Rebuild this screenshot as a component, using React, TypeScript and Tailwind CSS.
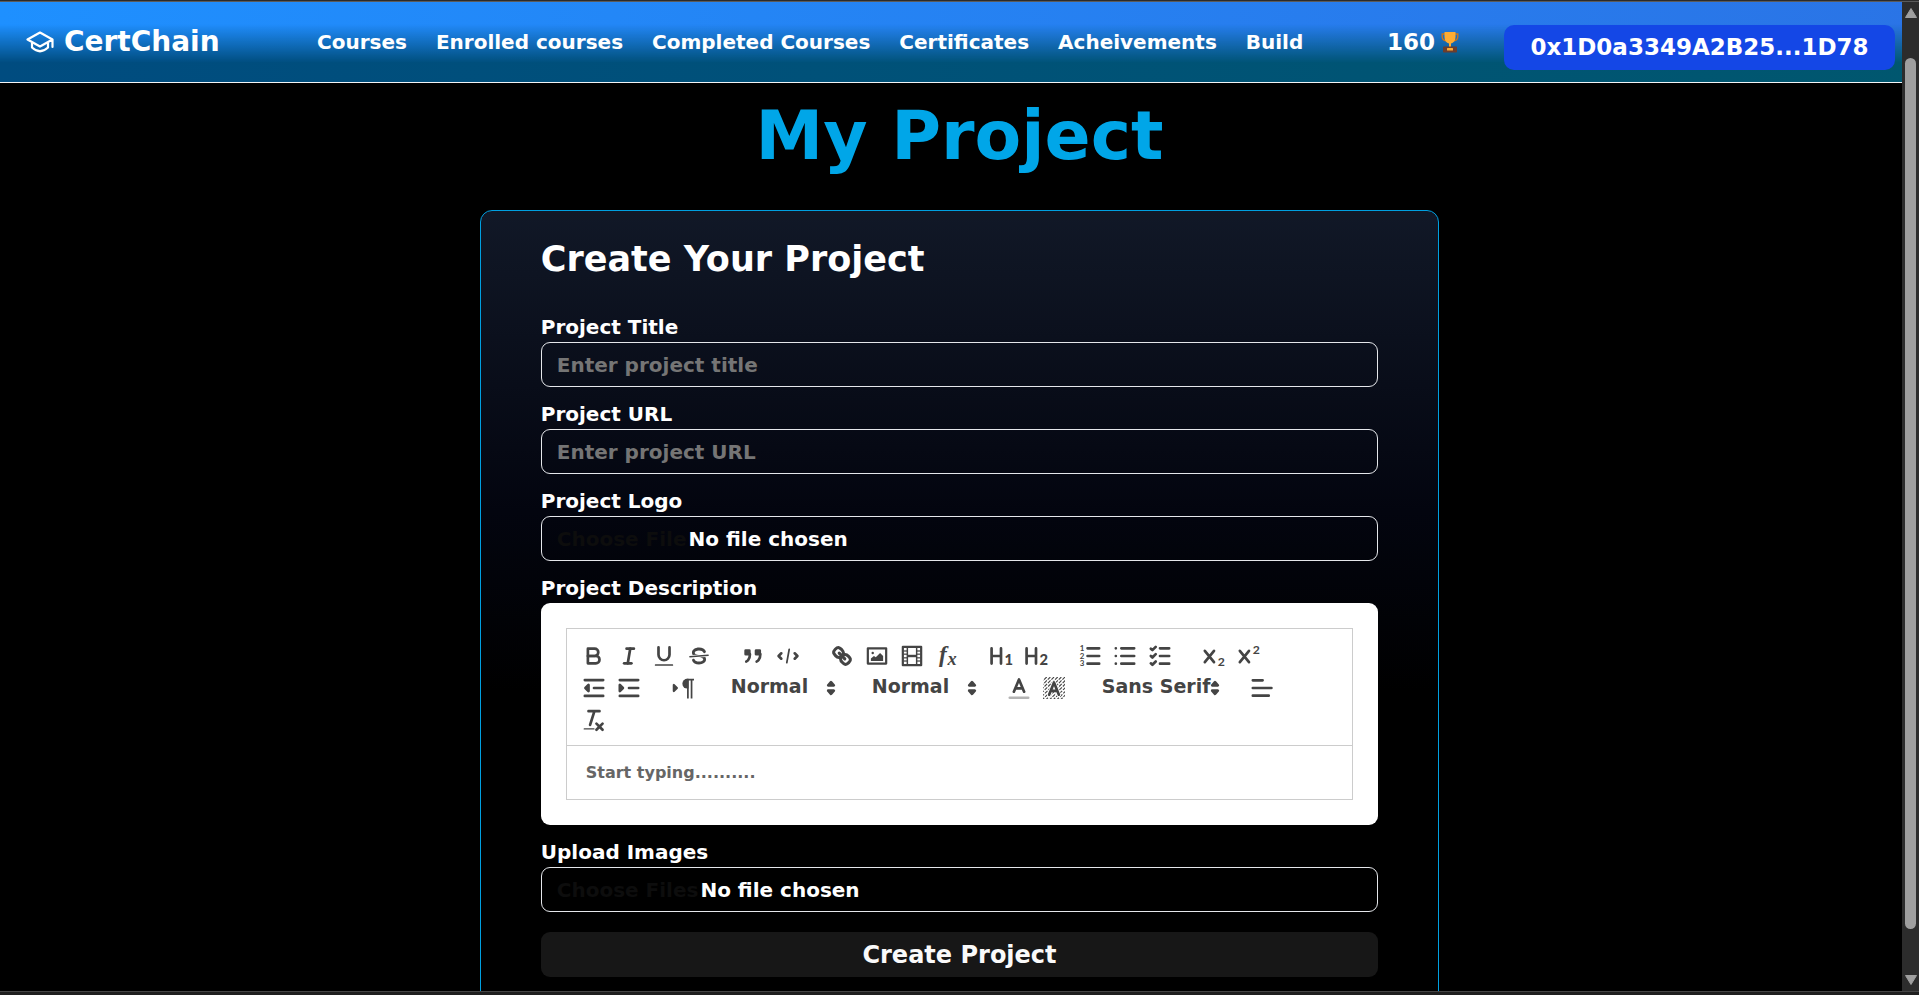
import React from "react";

const navLinks = ["Courses", "Enrolled courses", "Completed Courses", "Certificates", "Acheivements", "Build"];

function Glyph({ children }: { children: React.ReactNode }) {
  return (
    <svg
      viewBox="0 0 18 18"
      className="h-[22px] w-[22px] shrink-0 overflow-visible"
      fill="none"
      stroke="#444"
      strokeWidth="2.2"
      strokeLinecap="round"
      strokeLinejoin="round"
      aria-hidden="true"
    >
      {children}
    </svg>
  );
}

const solid = { fill: "#444", stroke: "none" };
const both = { fill: "#444" };
const sans = { fill: "#444", stroke: "none", fontFamily: "Lato, sans-serif", fontWeight: 700 };
const serif = { fill: "#444", stroke: "none", fontFamily: "'Liberation Serif', serif", fontStyle: "italic", fontWeight: 700 };

const icons: Record<string, React.ReactNode> = {
  bold: (
    <>
      <path d="M4,3H9.500a3,3,0,0,1,0,6H4V3Z" />
      <path d="M4,9h6.500a3,3,0,0,1,0,6H4V9Z" />
    </>
  ),
  italic: (
    <>
      <line x1="7" x2="13" y1="3" y2="3" />
      <line x1="5" x2="11" y1="15" y2="15" />
      <line x1="8" x2="10" y1="15" y2="3" />
    </>
  ),
  underline: (
    <>
      <path d="M4.5,2V8a4.5,4.500,0,0,0,9,0V2" />
      <rect {...solid} height="1.2" rx="0.5" width="15" x="1.5" y="15.8" />
    </>
  ),
  strike: (
    <g transform="translate(-1.35 -1.35) scale(1.15)">
      <line strokeWidth="1" x1="15.5" x2="2.5" y1="8.5" y2="9.5" />
      <path {...solid} d="M9.007,8C6.542,7.791,6,7.519,6,6.5,6,5.792,7.283,5,9,5c1.571,0,2.765.679,2.969,1.309a1,1,0,0,0,1.9-.617C13.356,4.106,11.354,3,9,3,6.2,3,4,4.538,4,6.5a3.2,3.2,0,0,0,.5,1.843Z" />
      <path {...solid} d="M8.984,10C11.457,10.208,12,10.479,12,11.5c0,0.708-1.283,1.5-3,1.5-1.571,0-2.765-.679-2.969-1.309a1,1,0,1,0-1.9.617C4.644,13.894,6.646,15,9,15c2.8,0,5-1.538,5-3.5a3.2,3.2,0,0,0-.5-1.843Z" />
    </g>
  ),
  blockquote: (
    <>
      <rect {...both} height="3" width="3" x="3" y="4.500" />
      <rect {...both} height="3" width="3" x="11.500" y="4.500" />
      <path d="M6.500,7.500c0,5-3,6-3,6" />
      <path d="M15,7.500c0,5-3,6-3,6" />
    </>
  ),
  code: (
    <>
      <polyline points="3.500 6.800 1.300 9 3.500 11.200" />
      <polyline points="14.500 6.800 16.700 9 14.500 11.200" />
      <line strokeWidth="1.4" x1="10" x2="8" y1="3.500" y2="14.500" />
    </>
  ),
  link: (
    <g transform="translate(-1.35 -1.35) scale(1.15)">
      <line x1="7" x2="11" y1="7" y2="11" />
      <path d="M8.9,4.577a3.476,3.476,0,0,1,.36,4.679A3.476,3.476,0,0,1,4.577,8.9C3.185,7.5,2.035,6.4,4.217,4.217S7.5,3.185,8.9,4.577Z" />
      <path d="M13.423,9.1a3.476,3.476,0,0,0-4.679-.36,3.476,3.476,0,0,0,.36,4.679c1.392,1.392,2.5,2.542,4.679.36S14.815,10.5,13.423,9.1Z" />
    </g>
  ),
  image: (
    <>
      <rect strokeWidth="1.8" height="12.500" width="15" x="1.5" y="2.700" />
      <circle {...solid} cx="5.5" cy="6.5" r="1" />
      <polyline {...solid} points="4 13 4 11 6.5 9 8 10 11.5 6.5 14 9 14 13" />
    </>
  ),
  video: (
    <>
      <rect strokeWidth="1.8" height="15" width="15" x="1.500" y="1.500" />
      <g {...solid}>
        <rect height="15" width="1.2" x="4.6" y="1.500" />
        <rect height="15" width="1.2" x="12.2" y="1.500" />
        <rect height="2" width="8" x="5" y="8" />
        {[4.4, 7, 10, 12.6].map((y) => (
          <g key={y}>
            <rect height="1" width="3" x="2" y={y} />
            <rect height="1" width="3" x="13" y={y} />
          </g>
        ))}
      </g>
    </>
  ),
  formula: (
    <>
      <text {...serif} x="2.500" y="13.500" fontSize="19">f</text>
      <text {...serif} x="9.5" y="16.500" fontSize="15">x</text>
    </>
  ),
  header1: (
    <>
      <path d="M1.300,2.800V15.200M9,2.800V15.200M1.300,9H9" />
      <text {...sans} x="11.8" y="16" fontSize="12" fontWeight="900">1</text>
    </>
  ),
  header2: (
    <>
      <path d="M1.300,2.800V15.200M9,2.800V15.200M1.300,9H9" />
      <text {...sans} x="11.8" y="16" fontSize="12" fontWeight="900">2</text>
    </>
  ),
  ordered: (
    <>
      <path d="M7,2.700H16.500M7,9H16.500M7,15.300H16.500" />
      <g {...sans} fontSize="6.5">
        <text x="0.6" y="5">1</text>
        <text x="0.6" y="11.2">2</text>
        <text x="0.6" y="17.4">3</text>
      </g>
    </>
  ),
  bullet: <path d="M6,2.700H16.500M6,9H16.500M6,15.300H16.500M1.500,2.700H1.501M1.500,9H1.501M1.500,15.300H1.501" />,
  check: <path d="M9,2.700H16.500M9,9H16.500M9,15.300H16.500M1.5,3L2.8,4.2L5.5,1.500M1.5,9L2.8,10.2L5.5,7.500M1.5,15L2.8,16.2L5.5,13.500" />,
  sub: (
    <>
      <path d="M1.500,4.800L9,14M9,4.800L1.500,14" />
      <text {...sans} x="12" y="17.500" fontSize="10">2</text>
    </>
  ),
  super: (
    <>
      <path d="M1.500,4.800L9,14M9,4.800L1.500,14" />
      <text {...sans} x="12" y="7.5" fontSize="10">2</text>
    </>
  ),
  outdent: (
    <>
      <path d="M1.5,2.5H16.5M1.5,15.5H16.5M9,9H16.5" />
      <polygon {...both} points="4.5 6.5 4.5 11.5 2 9" />
    </>
  ),
  indent: (
    <>
      <path d="M1.5,2.5H16.5M1.5,15.5H16.5M9,9H16.5" />
      <polygon {...both} points="1.5 6.5 1.5 11.5 4 9" />
    </>
  ),
  direction: (
    <>
      <polygon {...both} strokeWidth="1.8" points="1.5 6.5 1.5 11.5 4 9" />
      <path {...solid} d="M12.500,1.500a4,4,0,0,0,0,8h1V1.500Z" />
      <path strokeWidth="1.4" strokeLinecap="butt" d="M12,2.2H18M13,2V17.500M16,2V17.500" />
    </>
  ),
  color: (
    <>
      <line strokeOpacity="0.4" x1="1.5" x2="16.5" y1="17" y2="17" />
      <path d="M4.8,12L9,2L13.2,12M6.5,9.3H11.5" />
    </>
  ),
  background: (
    <>
      <defs>
        <clipPath id="swatch">
          <rect x="0" y="0" width="18" height="18" />
        </clipPath>
      </defs>
      <g clipPath="url(#swatch)" strokeWidth="0.9" strokeLinecap="butt" strokeDasharray="3 1">
        {[3, 6, 9, 12, 15, 18, 21, 24, 27, 30, 33].map((n) => (
          <line key={n} x1={n} y1="0" x2="0" y2={n} />
        ))}
      </g>
      <path stroke="#fff" strokeWidth="3.6" d="M5,14.500L9,4.500L13,14.500" />
      <path d="M5,14.500L9,4.500L13,14.500M6.5,11.3H11.5" />
    </>
  ),
  align: <path d="M1.5,9H16.700M1.5,15.300H14.500M1.5,2.700H9.500" />,
  clean: (
    <>
      <path d="M4.5,1.800H13.5M5.8,13L9.3,2M11,12L16,17M16,12L11,17" />
      <rect {...solid} height="1" rx="0.5" width="9" x="0.5" y="15.8" />
    </>
  ),
};

function Tool({ name }: { name: string }) {
  return (
    <button type="button" aria-label={name} className="flex h-8 w-[35px] items-center justify-center">
      <Glyph>{icons[name]}</Glyph>
    </button>
  );
}

function Tools({ names }: { names: string[] }) {
  return (
    <div className="mr-[19px] flex">
      {names.map((n) => (
        <Tool key={n} name={n} />
      ))}
    </div>
  );
}

function Picker({ label, text, wide }: { label: string; text: string; wide?: boolean }) {
  return (
    <div className={wide ? "relative mr-[19px] w-[135px]" : "relative mr-[19px] w-[122px]"}>
      <select
        aria-label={label}
        className="h-8 w-full appearance-none bg-transparent pb-1 pl-[11px] text-[19px] leading-7 font-bold text-[#444] outline-none"
      >
        <option>{text}</option>
      </select>
      <span className="pointer-events-none absolute top-[5px] right-0">
        <Glyph>
          <polygon {...both} points="6.700 11.200 9 13.700 11.300 11.200" />
          <polygon {...both} points="6.700 6.800 9 4.300 11.300 6.800" />
        </Glyph>
      </span>
    </div>
  );
}

function Field({ id, label, children }: { id: string; label: string; children: React.ReactNode }) {
  return (
    <div className="mb-[15px] flex flex-col gap-[3px]">
      <label htmlFor={id} className="text-xl leading-6 font-bold text-white">
        {label}
      </label>
      {children}
    </div>
  );
}

const inputClass =
  "h-[45px] w-full rounded-[9px] border border-[#e5e7eb] bg-transparent px-[15px] text-xl font-bold text-white outline-none placeholder:text-[#757575]";
const fileClass =
  "h-[45px] w-full rounded-[9px] border border-[#e5e7eb] bg-transparent px-[15px] py-2 text-xl leading-7 font-bold text-white file:mr-0.5 file:border-0 file:bg-transparent file:p-0 file:font-bold file:text-[#0d0d0d]";

function Trophy() {
  return (
    <svg viewBox="0 0 18 22" className="h-[22px] w-[18px]" aria-hidden="true">
      <path d="M4 3H1.2v2.5c0 2.6 1.6 4 4 4.2M14 3h2.8v2.5c0 2.6-1.6 4-4 4.2" fill="none" stroke="#c9751c" strokeWidth="1.4" />
      <path d="M3.5 1h11v5c0 3.6-2 6-4.5 6.6V16H8v-3.4C5.500 12 3.500 9.600 3.500 6z" fill="#ffac33" />
      <rect x="2" y="15.500" width="14" height="6" rx="0.800" fill="#6b3d2e" />
      <rect x="6" y="17" width="6" height="2.500" rx="0.500" fill="#ffac33" />
    </svg>
  );
}

export default function App() {
  return (
    <div className="relative flex h-screen flex-col overflow-hidden bg-black font-['DejaVu_Sans',sans-serif]">
      <div className="h-0.5 shrink-0 border-b border-[#5a5a5a] bg-[#2b2b2b]" />

      <div className="min-h-0 flex-1 overflow-hidden">
        <header className="relative h-[81px] border-b border-[#f3f4f6] bg-gradient-to-r from-[#1e90ff] to-[#2a74e6]">
          <div className="absolute inset-0 bg-gradient-to-r from-[#004c80] to-[#00576f] [mask-image:linear-gradient(to_bottom,transparent_28%,black_76%)]" />
          <div className="relative flex h-20 items-center pr-6 pl-[26px] text-white">
            <a href="#home" className="flex w-[291px] items-center gap-2.5 text-[28px] leading-8 font-bold">
              <svg viewBox="0 0 28 22" className="h-[22px] w-7" fill="none" stroke="white" strokeWidth="2.2" strokeLinejoin="round" strokeLinecap="round" aria-hidden="true">
                <path d="M14 1.500L26.500 8.500L14 15.500L1.500 8.500ZM6 12v4.500q8 7.500 16 0V12M26.500 8.500V16" />
              </svg>
              CertChain
            </a>
            <nav className="flex gap-[29px] text-xl leading-6 font-bold">
              {navLinks.map((l) => (
                <a key={l} href={"#" + l.toLowerCase().replace(" ", "-")} className="whitespace-nowrap">
                  {l}
                </a>
              ))}
            </nav>
            <div className="ml-auto flex items-center gap-[45px]">
              <span className="flex items-center gap-1.5 text-[23px] leading-8 font-bold">
                160
                <Trophy />
              </span>
              <button type="button" className="mt-2.5 h-[45px] w-[391px] rounded-[10px] bg-[#1447e6] text-[23px] leading-8 font-bold">
                0x1D0a3349A2B25...1D78
              </button>
            </div>
          </div>
        </header>

        <main>
          <h1 className="pt-[17px] text-center text-[68px] leading-[72px] font-bold text-[#00a6e8]">My Project</h1>

          <section className="mx-auto mt-[38px] w-1/2 rounded-xl border border-[#009fe0] bg-[linear-gradient(to_bottom,#111827_0px,#03050f_300px,#000_480px)] px-[60px] pt-6 pb-16">
            <h2 className="text-[35px] leading-[48px] font-bold text-white">Create Your Project</h2>

            <form className="mt-8" onSubmit={(e) => e.preventDefault()}>
              <Field id="title" label="Project Title">
                <input id="title" type="text" placeholder="Enter project title" className={inputClass} />
              </Field>
              <Field id="url" label="Project URL">
                <input id="url" type="text" placeholder="Enter project URL" className={inputClass} />
              </Field>
              <Field id="logo" label="Project Logo">
                <input id="logo" type="file" className={fileClass} />
              </Field>
              <Field id="description" label="Project Description">
                <div className="rounded-[9px] bg-white p-[25px]">
                  <div className="border border-[#ccc] pt-[11px] pb-[9px] pl-2.5">
                    <div className="flex h-8">
                      <Tools names={["bold", "italic", "underline", "strike"]} />
                      <Tools names={["blockquote", "code"]} />
                      <Tools names={["link", "image", "video", "formula"]} />
                      <Tools names={["header1", "header2"]} />
                      <Tools names={["ordered", "bullet", "check"]} />
                      <Tools names={["sub", "super"]} />
                    </div>
                    <div className="flex h-8">
                      <Tools names={["outdent", "indent"]} />
                      <Tools names={["direction"]} />
                      <Picker label="Size" text="Normal" />
                      <Picker label="Heading" text="Normal" />
                      <Tools names={["color", "background"]} />
                      <Picker label="Font" text="Sans Serif" wide />
                      <Tools names={["align"]} />
                    </div>
                    <div className="flex h-8">
                      <Tools names={["clean"]} />
                    </div>
                  </div>
                  <textarea
                    id="description"
                    placeholder="Start typing.........."
                    className="block h-[54px] w-full resize-none border border-t-0 border-[#ccc] bg-transparent px-[19px] py-[15px] text-base leading-6 font-bold text-[#222] outline-none placeholder:text-[#666]"
                  />
                </div>
              </Field>
              <Field id="images" label="Upload Images">
                <input id="images" type="file" multiple className={fileClass} />
              </Field>
              <button type="submit" className="mt-[5px] h-[45px] w-full rounded-[9px] bg-[#171717] text-2xl leading-8 font-bold text-[#fafafa]">
                Create Project
              </button>
            </form>
          </section>
        </main>
      </div>

      <div className="absolute top-0.5 right-0 bottom-1 flex w-[17px] flex-col items-center bg-[#2c2c2c] py-1.5" aria-hidden="true">
        <svg viewBox="0 0 12 10" className="h-2.5 w-3" fill="#9f9f9f">
          <path d="M6 0.500L11.500 9.500H0.500Z" stroke="#9f9f9f" strokeLinejoin="round" />
        </svg>
        <div className="mt-10 mb-[46px] w-[11px] flex-1 rounded-full bg-[#9f9f9f]" />
        <svg viewBox="0 0 12 10" className="h-2.5 w-3" fill="#9f9f9f">
          <path d="M6 9.500L0.500 0.500H11.500Z" stroke="#9f9f9f" strokeLinejoin="round" />
        </svg>
      </div>

      <div className="h-1 shrink-0 border-t border-[#454545] bg-[#1f1f1f]" />
    </div>
  );
}
